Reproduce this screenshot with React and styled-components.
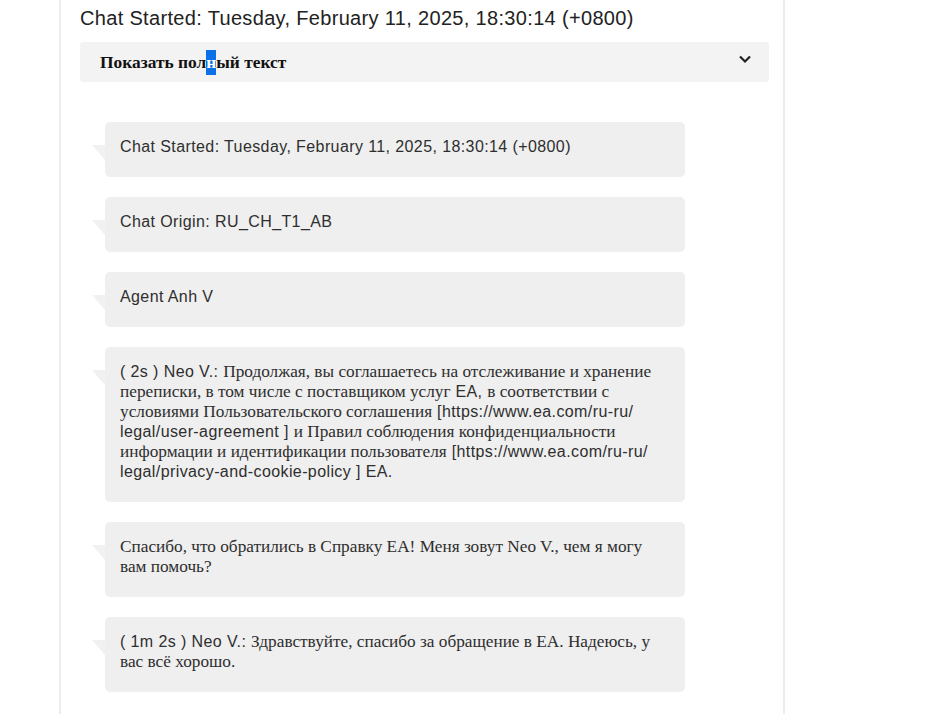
import React from "react";
import styled, { createGlobalStyle } from "styled-components";

const SANS = `"Liberation Sans", Arial, sans-serif`;
const SERIF = `"Liberation Serif", "Times New Roman", serif`;

const Global = createGlobalStyle`
  html, body { margin: 0; padding: 0; background: #ffffff; }
  body { font-family: ${SANS}; color: #2b2b2b; }
`;

const Page = styled.div`
  margin-left: 59px;
  width: 726px;
  min-height: 714px;
  box-sizing: border-box;
  border-left: 2px solid #ececec;
  border-right: 2px solid #ececec;
  padding: 0 14px 0 19px;
`;

const Title = styled.h1`
  margin: 0;
  padding-top: 6px;
  height: 36px;
  box-sizing: border-box;
  font-family: ${SANS};
  font-weight: 400;
  font-size: 20px;
  letter-spacing: 0.33px;
  line-height: 24px;
  color: #222;
`;

const Accordion = styled.div`
  display: flex;
  align-items: center;
  justify-content: space-between;
  height: 40px;
  margin-top: 6px;
  padding: 0 17px 0 20px;
  background: #f3f3f3;
  border-radius: 3px;
`;

const AccordionLabel = styled.span`
  font-family: ${SERIF};
  font-weight: 700;
  font-size: 17.4px;
  color: #111;
`;

const Selected = styled.span`
  background: #0a72e6;
  color: #fff;
  padding: 2px 0 3px;
`;

const Chevron = styled.svg`
  width: 14px;
  height: 10px;
  margin-bottom: 6px;
`;

const List = styled.div`
  display: flex;
  flex-direction: column;
  gap: 20px;
  padding: 40px 0 0 25px;
`;

const Bubble = styled.div`
  position: relative;
  width: 580px;
  box-sizing: border-box;
  padding: 15px 15px 20px;
  background: #efefef;
  border-radius: 5px;
  font-family: ${props => (props.$serif ? SERIF : SANS)};
  font-size: 16px;
  letter-spacing: 0.4px;
  line-height: 20px;
  color: #2e2e2e;

  &::before {
    content: "";
    position: absolute;
    left: -13px;
    top: 23px;
    width: 0;
    height: 0;
    border-top: 15px solid #f1f1f1;
    border-left: 13px solid transparent;
  }
`;

const Ru = styled.span`
  font-family: ${SERIF};
  font-size: 17.25px;
  letter-spacing: 0;
`;

export default function App() {
  return (
    <>
      <Global />
      <Page>
        <Title>Chat Started: Tuesday, February 11, 2025, 18:30:14 (+0800)</Title>
        <Accordion>
          <AccordionLabel>
            Показать пол<Selected>н</Selected>ый текст
          </AccordionLabel>
          <Chevron viewBox="0 0 14 10">
            <path d="M2 2.5 L7 7.5 L12 2.5" fill="none" stroke="#222" strokeWidth="2.2" />
          </Chevron>
        </Accordion>
        <List>
          <Bubble>Chat Started: Tuesday, February 11, 2025, 18:30:14 (+0800)</Bubble>
          <Bubble>Chat Origin: RU_CH_T1_AB</Bubble>
          <Bubble>Agent Anh V</Bubble>
          <Bubble>
            ( 2s ) Neo V.: <Ru>Продолжая, вы соглашаетесь на отслеживание и хранение</Ru>
            <br />
            <Ru>переписки, в том числе с поставщиком услуг</Ru> EA, <Ru>в соответствии с</Ru>
            <br />
            <Ru>условиями Пользовательского соглашения</Ru> [https://www.ea.com/ru-ru/
            <br />
            legal/user-agreement ] <Ru>и Правил соблюдения конфиденциальности</Ru>
            <br />
            <Ru>информации и идентификации пользователя</Ru> [https://www.ea.com/ru-ru/
            <br />
            legal/privacy-and-cookie-policy ] EA.
          </Bubble>
          <Bubble $serif>
            <Ru>Спасибо, что обратились в Справку EA! Меня зовут Neo V., чем я могу</Ru>
            <br />
            <Ru>вам помочь?</Ru>
          </Bubble>
          <Bubble>
            ( 1m 2s ) Neo V.: <Ru>Здравствуйте, спасибо за обращение в EA. Надеюсь, у</Ru>
            <br />
            <Ru>вас всё хорошо.</Ru>
          </Bubble>
        </List>
      </Page>
    </>
  );
}
